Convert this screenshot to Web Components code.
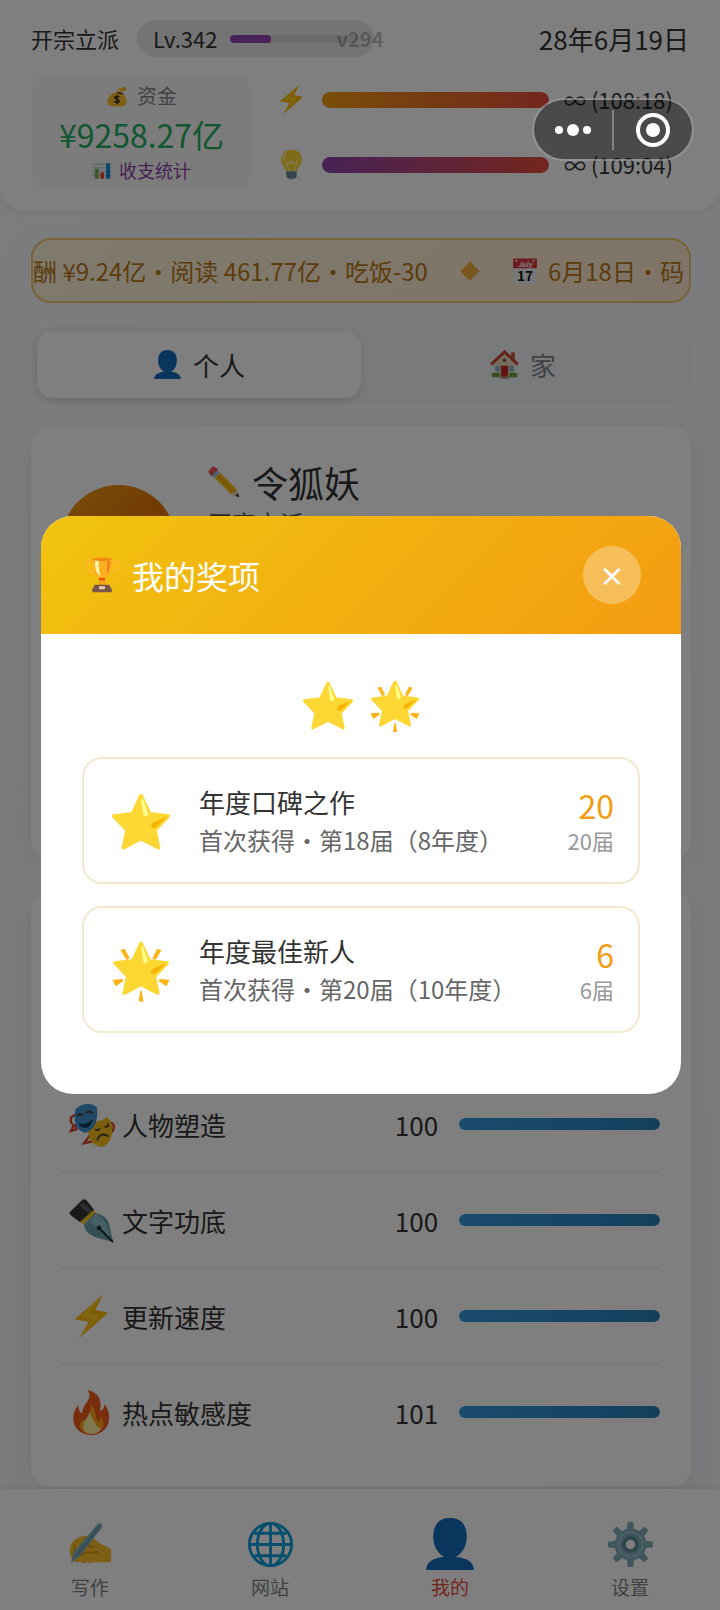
<!DOCTYPE html>
<html lang="zh-CN">
<head>
<meta charset="UTF-8">
<meta name="viewport" content="width=device-width, initial-scale=1">
<title>我的奖项</title>
<style>
    body {
        margin: 0;
        font-family: "Noto Sans CJK SC", "Noto Sans", sans-serif;
        color: #333;
        --muted: #7f8388;
        --purple: #8e44ad;
        --pad: 31px;
    }
</style>
</head>
<body>
<game-page></game-page>

<script>
// dibujos de los iconos, todos en una caja de 48x48
const STAR = `
    <path d="M24 3L31 18l15.500 2L35.500 31.500l3 14.500L24 38.500 9.500 46l3-14.500L1.500 20 17 18z" fill="#fdd835" stroke="#fdd835" stroke-width="3" stroke-linejoin="round"/>
    <path d="M25.500 6.500l3.800 11.300c.4 2.200-2.600 2.500-2.900.4L24.700 7.200c-.1-1.200.5-1.600.8-.7z" fill="#ffff8d" stroke="#ffff8d" stroke-width="1"/>
    <path d="M46 20.500L36.500 29c-2 1.600-5.200.2-3.500-2.500 1.200-1.900 6-3.500 13-6z" fill="#f4b400"/>`;

const PERSON = `
    <path d="M24 0c10 0 15.500 6 15.500 18 0 9-6 17-11.500 18.500h-8C14.500 35 8.500 27 8.500 18 8.500 6 14 0 24 0z" fill="#156dbb"/>
    <path d="M2 48c0-7 6-11 16-12h12c10 1 16 5 16 12z" fill="#156dbb"/>`;

const BOLT = `<path d="M36 1L6 27l15 2.500L11 47l31-27-14-3z" fill="#feb804"/>
    <path d="M36 1L12 24l13 3-14 20 23-24-13-3z" fill="#fdd835" opacity=".55"/>`;

const ICONS = {
    star: STAR,
    glow: `<g transform="translate(1 -1) scale(.96)">${STAR}</g>
        <g fill="#fcb316"><path d="M7 7.500l3.500-1 4 7.500c-1 1-2 1.500-2.800 1.300z"/><path d="M41 7.500l-3.500-1-4 7.500c1 1 2 1.500 2.800 1.300z"/>
        <path d="M.5 32l8-.5 1 1.500-6.500 4.500z"/><path d="M47.500 32l-8-.5-1 1.500 6.500 4.500z"/><path d="M22 50l1.500-9h1l1.500 9z"/></g>`,
    person: PERSON,
    bolt: BOLT,
    money: `<path d="M30 13l10-10 3 4c2 3 0 5-3 5l-8 4z" fill="#f2a600"/><path d="M26 4l6 3 8-3-3 9-9 2z" fill="#fdd835"/>
        <path d="M25 14l9 3c8 6 12 14 11 21-1 8-9 9-21 9S3 45 3 36c0-8 9-18 22-22z" fill="#fbc02d"/>
        <path d="M24 17l13 2" stroke="#543930" stroke-width="3"/>
        <path d="M29 27c-2-3-10-3-10 1s10 3 10 7-9 4-11 0M24 22v20" fill="none" stroke="#33271f" stroke-width="3"/>`,
    chart: `<path d="M1 1h46v46H1z" fill="#eef2f4"/><path d="M1 10h46M1 19h46M1 28h46M1 37h46" stroke="#b0bec5" stroke-width="2"/>
        <path d="M7 21h9v24H7z" fill="#7cb342"/><path d="M20 30h9v15h-9z" fill="#f44336"/><path d="M34 8h9v37h-9z" fill="#0288d1"/>`,
    bulb: `<path d="M24 1c11 0 16 7 16 15 0 9-7 13-8 20H16c-1-7-8-11-8-20C8 8 13 1 24 1z" fill="#fdd835"/>
        <path d="M20 35l-4-14c3 3 5 2 6-1 1 3 3 3 4 0 1 3 3 4 6 1l-4 14" fill="none" stroke="#fff59d" stroke-width="2"/>
        <path d="M16 6c-4 3-5 7-4 11" fill="none" stroke="#fff59d" stroke-width="3"/>
        <path d="M16 34h16v8c0 3-4 5-8 5s-8-2-8-5z" fill="#78a3ad"/><path d="M16 38h16M17 42h14" stroke="#49707a" stroke-width="2"/>`,
    calendar: `<path d="M2 1h44v46H2z" fill="#eceff1"/><path d="M2 1h44v18H2z" fill="#d9353b"/>
        <circle cx="8" cy="5" r="2" fill="#fff"/><circle cx="40" cy="5" r="2" fill="#fff"/>
        <text x="24" y="16" text-anchor="middle" font-size="13" font-style="italic" font-weight="700" fill="#fff">July</text>
        <text x="24" y="42" text-anchor="middle" font-size="25" font-weight="700" fill="#111">17</text>`,
    house: `<path d="M35 4h6v14h-6z" fill="#c75b39"/><path d="M7 22L24 7l17 15v24H7z" fill="#e8dcc5"/>
        <path d="M2 24L24 3l22 21" fill="none" stroke="#c9492c" stroke-width="5"/>
        <path d="M18 26h12v19H18z" fill="#c62828"/><path d="M9 27h7v9H9zM32 27h7v9h-7z" fill="#7fb9cf"/>
        <path d="M3 38h13v7H3zM32 38h13v7H32z" fill="#689f38"/><path d="M17 44h14v4H17z" fill="#b0a8a0"/><circle cx="24" cy="17" r="3" fill="#8d4b33"/>`,
    pencil: `<path d="M2 8l6-6 6 4-8 8z" fill="#f0504d" stroke="#f0504d" stroke-width="3" stroke-linejoin="round"/>
        <path d="M6 14l8-8 4 4-8 8z" fill="#8ecbe6"/><path d="M10 18l8-8 25 25-8 8z" fill="#fdc318"/>
        <path d="M14 14l25 25" stroke="#f09d00" stroke-width="2"/>
        <path d="M43 35l4 12-12-4z" fill="#e8cfa8"/><path d="M45 41l2 6-6-2z" fill="#333"/>`,
    trophy: `<path d="M10 6C-1 4-1 16 12 21M38 6c11-2 11 10-2 15" fill="none" stroke="#ffb72c" stroke-width="3"/>
        <path d="M11 2h26c1 13-1 22-9 26h-8C12 24 10 15 11 2z" fill="#ffb01f"/><ellipse cx="24" cy="3" rx="13" ry="2.500" fill="#f28c10"/>
        <path d="M15 5h5c-1 8 0 15 2 20-6-3-8-11-7-20z" fill="#fff3b0"/><path d="M31 5h4c0 8-1 14-5 18 1-6 1-12 1-18z" fill="#f57c1f"/>
        <path d="M21 27h6l2 10H19z" fill="#f9a01b"/><path d="M20 28h8v3h-8z" fill="#e65100"/>
        <path d="M14 37h20l2 5H12zM11 42h26v5H11z" fill="#795548"/><path d="M20 39h8v4h-8z" fill="#e6c9a8"/>`,
    masks: `<g transform="translate(0 2)"><path d="M8 12c-7 0-8 7-3 11l-3 6 6-2-2-5M22 34l-6 8 9-2 2-5M44 20c6 1 4 9 0 11" fill="none" stroke="#d9492f" stroke-width="2.500"/>
        <path d="M21 19c7 1 14-1 20-5 8 8 7 28-6 32-10-1-17-10-14-27z" fill="#f9bf19"/>
        <path d="M7 6c5-7 18-8 23-2 1 13-2 24-13 27C7 28 4 18 7 6z" fill="#3f92cf"/>
        <path d="M10 20c5 3 10 1 15-4 0 9-11 14-15 4z" fill="#173a5a"/><path d="M9 13c2-3 4-2 6 0M18 10c3-3 5-2 7 0M28 27c2 2 4 1 5-1M38 24c2 1 4 0 4-3M30 39c2-7 8-8 12-4" fill="none" stroke="#4d3d31" stroke-width="2"/></g>`,
    nib: `<path d="M1 15L14 2c3-2 5 0 13 11L12 26C3 19-1 17 1 15z" fill="#343434"/><path d="M13 6l10 10" stroke="#5b5b5b" stroke-width="5"/>
        <path d="M26 13l3 3-14 12-3-3z" fill="#f6c51c"/><path d="M28 16c10 2 14 7 15 13l4 18-18-5c-8-3-12-7-13-14z" fill="#6b9fad"/>
        <path d="M28 17c8 4 12 9 13 14l4 14L22 25z" fill="#8ac0cc"/><circle cx="32" cy="32" r="2.500" fill="#16292e"/><path d="M32 32l15 15" stroke="#16292e" stroke-width="2"/>`,
    fire: `<path d="M20 0c10 2 16 10 13 22 3 0 5-3 5-7 6 8 7 20 0 27-8 8-21 8-29 0-7-8-5-19 1-26 0 5 1 7 4 9 1-12 12-14 6-25z" fill="#ee5a1c"/>
        <path d="M22 14c8 7 5 13 9 19 2 0 3-2 3-5 6 7 2 18-9 19-13 1-17-10-10-17 1 3 2 3 4 3 2-7 6-11 3-19z" fill="#ffa31a"/>
        <path d="M22 23c-1 7-10 12-6 20 4 6 17 5 18-3-2 1-4 0-5-3-3-5-5-7-7-14z" fill="#fff1a3"/>`,
    write: `<path d="M2 28C4 18 15 13 25 15l8 7 13 7v14H27c-3 2-5 1-6-1-3 3-6 2-8 0-4 2-6 1-8-2-3-3-3-7-3-12z" fill="#fbc02d"/>
        <path d="M12 28c5-4 9-4 15-1M14 35c7-5 12-1 18-3M7 24c-1 5 0 9 4 12" fill="none" stroke="#d99a1a" stroke-width="2"/>
        <path d="M31 3c2-4 7-1 5 3L13 36l-10 8 3-12z" fill="#82aec0"/><path d="M33 5L9 36" stroke="#6a97ac" stroke-width="2"/>`,
    globe: `<g fill="none" stroke="#0b9ddb" stroke-width="3"><circle cx="24" cy="24" r="22.500"/><ellipse cx="24" cy="24" rx="14" ry="22.500"/>
        <path d="M24 1v46M1 24h46M7 12h34M7 36h34"/></g>`,
    gear: `<g fill="#82aebb"><circle cx="24" cy="24" r="17"/><path d="M21 0h6l1 9h-8zM21 48h6l1-9h-8zM0 21v6l9 1v-8zM48 21v6l-9 1v-8z"/>
        <path transform="rotate(45 24 24)" d="M21 0h6l1 9h-8zM21 48h6l1-9h-8zM0 21v6l9 1v-8zM48 21v6l-9 1v-8z"/></g>
        <circle cx="24" cy="24" r="13" fill="none" stroke="#9bc4d0" stroke-width="2"/><circle cx="24" cy="24" r="7" fill="#fff" stroke="#5f8b98" stroke-width="4"/>`
};

// base comun: abre el shadow root y pinta la plantilla
class BaseElement extends HTMLElement {
    constructor() {
        super();
        this.attachShadow({ mode: 'open' });
    }
    connectedCallback() {
        this.shadowRoot.innerHTML = this.render();
    }
    attr(name, fallback = '') {
        return this.getAttribute(name) || fallback;
    }
}

class UiIcon extends BaseElement {
    render() {
        const size = this.attr('size', '24');
        return /*html*/ `
        <style>
            :host{ display:inline-flex; flex:none; width:${size}px; height:${size}px; }
            svg{ width:100%; height:100%; overflow:visible; }
        </style>
        <svg viewBox="0 0 48 48" aria-hidden="true">${ICONS[this.attr('name')]}</svg>
        `;
    }
}
customElements.define('ui-icon', UiIcon);

class StatBar extends BaseElement {
    render() {
        const value = this.attr('value', '100');
        return /*html*/ `
        <style>
            :host{ display:block; flex:1; height:var(--bar-height, 12px); }
            .track{ height:100%; border-radius:8px; background:#d4d4d6; overflow:hidden; }
            .fill{ height:100%; width:${value}%; border-radius:8px; background:var(--bar-fill, linear-gradient(90deg, #3498db, #2980b9)); }
        </style>
        <div class="track" role="progressbar" aria-label="${this.attr('label')}" aria-valuenow="${value}">
            <div class="fill"></div>
        </div>
        `;
    }
}
customElements.define('stat-bar', StatBar);

class GameHeader extends BaseElement {
    render() {
        return /*html*/ `
        <style>
            :host{
                display:block;
                position:relative;
                padding:20px var(--pad) 21px;
                background:#fff;
                border-radius:0 0 26px 26px;
                box-shadow:0 2px 6px rgba(0,0,0,.06);
            }
            .top{ display:flex; align-items:center; font-size:22px; line-height:37px; }
            .level{
                display:flex;
                align-items:center;
                gap:13px;
                width:205px;
                margin-left:18px;
                padding:0 16px;
                border-radius:20px;
                background:#e9e9ea;
                --bar-height:8px;
                --bar-fill:#8e44ad;
            }
            .date{ margin-left:auto; font-size:26px; }
            .version{
                position:absolute;
                top:20px;
                left:50%;
                transform:translateX(-50%);
                font-size:20px;
                font-weight:700;
                line-height:37px;
                color:rgba(0,0,0,.25);
            }
            .stats{ display:flex; gap:24px; margin-top:17px; }
            .funds{
                flex:0 0 221px;
                display:flex;
                flex-direction:column;
                align-items:center;
                justify-content:center;
                height:116px;
                border-radius:20px;
                background:#f8f8f8;
            }
            .label{ display:flex; align-items:center; gap:9px; font-size:20px; line-height:30px; color:var(--muted); }
            .amount{ font-size:32px; line-height:46px; color:#27ae60; }
            button{
                display:flex;
                align-items:center;
                gap:7px;
                padding:0;
                border:0;
                background:none;
                font:inherit;
                font-size:18px;
                line-height:26px;
                color:var(--purple);
            }
            .meters{ flex:1; display:flex; flex-direction:column; justify-content:center; gap:32px; font-size:22px; line-height:33px; }
            .meter{ display:flex; align-items:center; gap:15px; --bar-height:16px; }
            .energy{ --bar-fill:linear-gradient(90deg, #f39c12, #e74c3c); }
            .ideas{ --bar-fill:linear-gradient(90deg, #8e44ad, #e74c3c); }
            .time{ width:125px; white-space:nowrap; }
        </style>
        <div class="top">
            <span>开宗立派</span>
            <div class="level"><span>Lv.342</span><stat-bar value="32" label="等级"></stat-bar></div>
            <span class="date">28年6月19日</span>
        </div>
        <span class="version">v294</span>
        <div class="stats">
            <div class="funds">
                <span class="label"><ui-icon name="money" size="22"></ui-icon>资金</span>
                <span class="amount">¥9258.27亿</span>
                <button type="button"><ui-icon name="chart" size="20"></ui-icon>收支统计</button>
            </div>
            <div class="meters">
                <div class="meter energy"><ui-icon name="bolt" size="31"></ui-icon><stat-bar label="体力"></stat-bar><span class="time">∞ (108:18)</span></div>
                <div class="meter ideas"><ui-icon name="bulb" size="31"></ui-icon><stat-bar label="灵感"></stat-bar><span class="time">∞ (109:04)</span></div>
            </div>
        </div>
        `;
    }
}
customElements.define('game-header', GameHeader);

class NewsTicker extends BaseElement {
    render() {
        return /*html*/ `
        <style>
            :host{
                display:flex;
                align-items:center;
                gap:32px;
                overflow:hidden;
                box-sizing:border-box;
                height:65px;
                border:2px solid #f0c674;
                border-radius:20px;
                background:linear-gradient(135deg, #fff5dc, #ffe8cf);
                font-size:24px;
                line-height:36px;
                white-space:nowrap;
                color:#b8791a;
            }
            .diamond{ font-size:20px; color:#f0b13c; }
            .item{ display:flex; align-items:center; gap:10px; }
        </style>
        <span class="item">酬 ¥9.24亿·阅读 461.77亿·吃饭-30</span>
        <span class="diamond">◆</span>
        <span class="item"><ui-icon name="calendar" size="26"></ui-icon>6月18日·码</span>
        `;
    }
}
customElements.define('news-ticker', NewsTicker);

class TabSwitch extends BaseElement {
    render() {
        return /*html*/ `
        <style>
            :host{ display:flex; padding:5px 6px; border-radius:20px; background:#f3f5f7; }
            button{
                flex:1;
                display:flex;
                align-items:center;
                justify-content:center;
                gap:11px;
                height:67px;
                border:0;
                border-radius:16px;
                background:none;
                font:inherit;
                font-size:26px;
                color:var(--muted);
            }
            .active{ background:#fff; color:#333; box-shadow:0 3px 8px rgba(0,0,0,.12); }
        </style>
        <button type="button" class="active"><ui-icon name="person" size="29"></ui-icon>个人</button>
        <button type="button"><ui-icon name="house" size="29"></ui-icon>家</button>
        `;
    }
}
customElements.define('tab-switch', TabSwitch);

class PanelCard extends BaseElement {
    render() {
        return /*html*/ `
        <style>
            :host{
                display:flex;
                flex-direction:column;
                box-sizing:border-box;
                border-radius:20px;
                background:#fff;
                box-shadow:0 8px 32px rgba(31,38,70,.08);
            }
        </style>
        <slot></slot>
        `;
    }
}
customElements.define('panel-card', PanelCard);

class PlayerProfile extends BaseElement {
    render() {
        return /*html*/ `
        <style>
            :host{ display:flex; align-items:center; gap:32px; height:172px; }
            .avatar{ width:115px; height:115px; border-radius:50%; background:linear-gradient(135deg, #f39c12, #d35400); }
            .info{ align-self:flex-start; }
            .name{ display:flex; align-items:center; gap:12px; margin:0; font-size:36px; font-weight:400; line-height:52px; }
            .rank{ margin:0; font-size:24px; line-height:30px; color:#555; }
        </style>
        <div class="avatar"></div>
        <div class="info">
            <h2 class="name"><ui-icon name="pencil" size="32"></ui-icon>令狐妖</h2>
            <p class="rank">开宗立派</p>
        </div>
        `;
    }
}
customElements.define('player-profile', PlayerProfile);

class SkillRow extends BaseElement {
    render() {
        return /*html*/ `
        <style>
            :host{
                display:grid;
                grid-template-columns:45px 1fr auto 34%;
                align-items:center;
                box-sizing:border-box;
                height:96px;
                padding:0 1px 0 8px;
                border-bottom:2px solid #f3f3f5;
                font-size:26px;
            }
            :host(:last-of-type){ border-bottom-color:transparent; }
            .name{ padding-left:8px; }
            .value{ padding-right:21px; }
        </style>
        <ui-icon name="${this.attr('icon')}" size="45"></ui-icon>
        <span class="name"><slot></slot></span>
        <span class="value">${this.attr('value')}</span>
        <stat-bar label="${this.attr('label')}"></stat-bar>
        `;
    }
}
customElements.define('skill-row', SkillRow);

class BottomNav extends BaseElement {
    render() {
        return /*html*/ `
        <style>
            :host{ display:block; position:relative; background:#fff; box-shadow:0 -2px 6px rgba(0,0,0,.06); }
            nav{ display:flex; height:121px; }
            a{
                flex:1;
                display:flex;
                flex-direction:column;
                align-items:center;
                justify-content:flex-end;
                padding-bottom:9px;
                text-decoration:none;
                font-size:19px;
                line-height:28px;
                color:var(--muted);
            }
            .icon{ display:flex; align-items:center; height:56px; margin-bottom:1px; }
            .active{ color:#e74c3c; }
        </style>
        <nav>
            <a href="#write"><span class="icon"><ui-icon name="write" size="45"></ui-icon></span>写作</a>
            <a href="#site"><span class="icon"><ui-icon name="globe" size="45"></ui-icon></span>网站</a>
            <a href="#me" class="active" aria-current="page"><span class="icon"><ui-icon name="person" size="52"></ui-icon></span>我的</a>
            <a href="#settings"><span class="icon"><ui-icon name="gear" size="45"></ui-icon></span>设置</a>
        </nav>
        `;
    }
}
customElements.define('bottom-nav', BottomNav);

class AwardItem extends BaseElement {
    render() {
        return /*html*/ `
        <style>
            :host{
                display:flex;
                align-items:center;
                gap:29px;
                box-sizing:border-box;
                height:127px;
                padding:0 24px 0 28px;
                border:2px solid #f3e8d0;
                border-radius:20px;
            }
            .info{ flex:1; }
            .title{ font-size:26px; line-height:38px; }
            .first{ font-size:24px; line-height:38px; color:#666; }
            .total{ text-align:right; }
            .count{ font-size:32px; line-height:38px; color:#f39c12; }
            .unit{ font-size:22px; line-height:32px; color:#999; }
        </style>
        <ui-icon name="${this.attr('icon')}" size="58"></ui-icon>
        <div class="info">
            <div class="title">${this.attr('name')}</div>
            <div class="first"><slot></slot></div>
        </div>
        <div class="total">
            <div class="count">${this.attr('count')}</div>
            <div class="unit">${this.attr('count')}届</div>
        </div>
        `;
    }
}
customElements.define('award-item', AwardItem);

class AwardDialog extends BaseElement {
    render() {
        return /*html*/ `
        <style>
            :host{
                position:fixed;
                inset:0;
                display:flex;
                align-items:center;
                justify-content:center;
                padding:0 39px 0 41px;
                background:rgba(0,0,0,.5);
            }
            .dialog{ flex:1; max-width:640px; border-radius:32px; background:#fff; overflow:hidden; }
            header{
                display:flex;
                align-items:center;
                justify-content:space-between;
                padding:30px 40px;
                background:linear-gradient(135deg, #f1c40f, #f39c12);
                color:#fff;
            }
            h1{ display:flex; align-items:center; gap:12px; margin:0; padding-left:3px; font-size:32px; font-weight:400; line-height:48px; }
            button{
                width:58px;
                height:58px;
                padding:0;
                border:0;
                border-radius:50%;
                background:rgba(255,255,255,.3);
                font:inherit;
                font-size:26px;
                font-weight:700;
                line-height:58px;
                color:#fff;
            }
            .body{ display:flex; flex-direction:column; gap:22px; padding:41px 41px 61px; }
            .badges{ display:flex; align-items:center; justify-content:center; gap:17px; height:60px; }
        </style>
        <div class="dialog" role="dialog" aria-modal="true" aria-labelledby="title">
            <header>
                <h1 id="title"><ui-icon name="trophy" size="36"></ui-icon>我的奖项</h1>
                <button type="button" aria-label="关闭">×</button>
            </header>
            <div class="body">
                <div class="badges"><ui-icon name="star" size="50"></ui-icon><ui-icon name="glow" size="50"></ui-icon></div>
                <slot></slot>
            </div>
        </div>
        `;
    }
}
customElements.define('award-dialog', AwardDialog);

// capsula flotante de la mini app (menu y cerrar)
class MiniCapsule extends BaseElement {
    render() {
        return /*html*/ `
        <style>
            :host{
                position:fixed;
                top:98px;
                right:26px;
                display:flex;
                align-items:center;
                box-sizing:border-box;
                width:162px;
                height:63px;
                border:2px solid rgba(255,255,255,.4);
                border-radius:32px;
                background:rgba(0,0,0,.42);
            }
            button{ flex:1; display:flex; justify-content:center; padding:0; border:0; background:none; }
            button + button{ border-left:2px solid rgba(255,255,255,.3); }
            svg{ width:40px; height:40px; fill:#fff; }
        </style>
        <button type="button" aria-label="更多">
            <svg viewBox="0 0 40 40"><circle cx="6" cy="20" r="4"/><circle cx="20" cy="20" r="6"/><circle cx="34" cy="20" r="4"/></svg>
        </button>
        <button type="button" aria-label="退出">
            <svg viewBox="0 0 40 40"><circle cx="20" cy="20" r="15" fill="none" stroke="#fff" stroke-width="4"/><circle cx="20" cy="20" r="7"/></svg>
        </button>
        `;
    }
}
customElements.define('mini-capsule', MiniCapsule);

class GamePage extends BaseElement {
    render() {
        return /*html*/ `
        <style>
            :host{
                display:flex;
                flex-direction:column;
                height:100vh;
                background:linear-gradient(135deg, #fafafd, #f5f6fb);
            }
            main{
                flex:1;
                min-height:0;
                overflow:hidden;
                display:flex;
                flex-direction:column;
                gap:23px;
                padding:27px 29px 2px var(--pad);
            }
            .profile{ min-height:434px; margin-bottom:7px; padding:30px; }
            .skills{ flex:1; justify-content:flex-end; padding:30px 30px 26px; }
        </style>
        <game-header></game-header>
        <main>
            <news-ticker></news-ticker>
            <tab-switch></tab-switch>
            <panel-card class="profile"><player-profile></player-profile></panel-card>
            <panel-card class="skills">
                <skill-row icon="masks" value="100">人物塑造</skill-row>
                <skill-row icon="nib" value="100">文字功底</skill-row>
                <skill-row icon="bolt" value="100">更新速度</skill-row>
                <skill-row icon="fire" value="101">热点敏感度</skill-row>
            </panel-card>
        </main>
        <bottom-nav></bottom-nav>
        <award-dialog>
            <award-item icon="star" name="年度口碑之作" count="20">首次获得·第18届（8年度）</award-item>
            <award-item icon="glow" name="年度最佳新人" count="6">首次获得·第20届（10年度）</award-item>
        </award-dialog>
        <mini-capsule></mini-capsule>
        `;
    }
}
customElements.define('game-page', GamePage);
</script>
</body>
</html>
